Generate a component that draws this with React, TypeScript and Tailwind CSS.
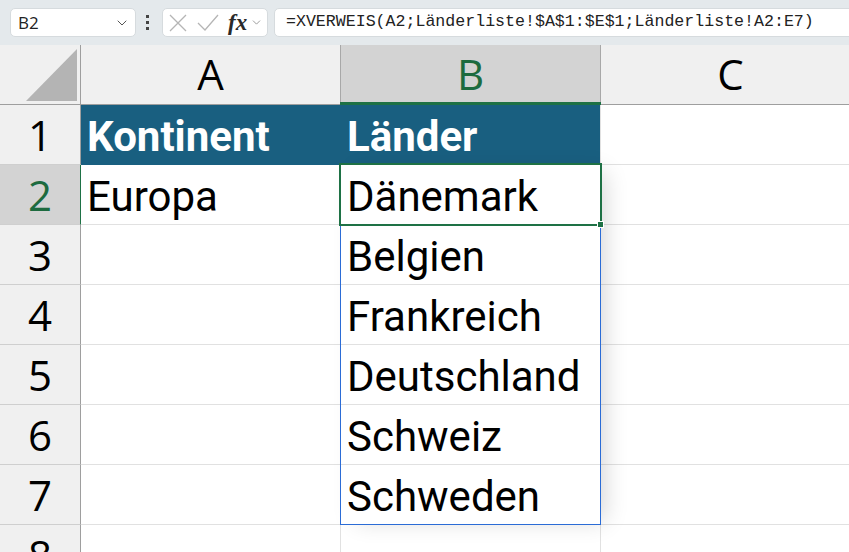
import { ChevronDown } from "lucide-react";

type Row = { n: number; a?: string; b?: string; head?: boolean; selected?: boolean };

const rows: Row[] = [
  { n: 1, a: "Kontinent", b: "Länder", head: true },
  { n: 2, a: "Europa", b: "Dänemark", selected: true },
  { n: 3, b: "Belgien" },
  { n: 4, b: "Frankreich" },
  { n: 5, b: "Deutschland" },
  { n: 6, b: "Schweiz" },
  { n: 7, b: "Schweden" },
  { n: 8 },
];

const cellText =
  "font-['Roboto',sans-serif] text-[42px] leading-[42px] text-black whitespace-nowrap";

const Toolbar = () => (
  <div className="flex h-[45px] items-center bg-[#e4e9ec]">
    <div className="ml-[10px] flex h-[29px] w-[126px] items-center justify-between rounded-[5px] border border-[#d6dbde] bg-white pl-[7px] pr-[5px]">
      <span className="font-['Open_Sans',sans-serif] text-[17px] text-[#222]">B2</span>
      <ChevronDown size={16} strokeWidth={1.5} className="text-[#555]" />
    </div>
    <div className="ml-[10px] flex flex-col gap-[3px]">
      <div className="h-[3px] w-[3px] bg-[#444]" />
      <div className="h-[3px] w-[3px] bg-[#444]" />
      <div className="h-[3px] w-[3px] bg-[#444]" />
    </div>
    <div className="ml-[13px] flex h-[29px] w-[106px] items-center rounded-[5px] border border-[#d6dbde] bg-white pl-[6px]">
      <svg width="18" height="18" viewBox="0 0 18 18" className="text-[#b5b5b5]">
        <path d="M1 1 L17 17 M17 1 L1 17" stroke="currentColor" strokeWidth="1.3" fill="none" />
      </svg>
      <svg width="22" height="17" viewBox="0 0 22 17" className="ml-[10px] text-[#b5b5b5]">
        <path d="M1 9 L8 16 L21 1" stroke="currentColor" strokeWidth="1.3" fill="none" />
      </svg>
      <span className="ml-[9px] font-['Liberation_Serif',serif] text-[23px] font-bold italic leading-none text-[#2a2a2a]">
        fx
      </span>
      <ChevronDown size={13} strokeWidth={1.5} className="ml-[3px] text-[#888]" />
    </div>
    <div className="ml-[6px] -mr-[10px] flex h-[29px] flex-1 items-center rounded-[5px] border border-[#d6dbde] bg-white pl-[11px]">
      <span className="font-['Liberation_Mono',monospace] text-[16.6px] text-[#222] whitespace-nowrap">
        =XVERWEIS(A2;Länderliste!$A$1:$E$1;Länderliste!A2:E7)
      </span>
    </div>
  </div>
);

const HeaderRow = () => (
  <div className="flex h-[60px] border-b border-[#9e9e9e] font-['Open_Sans',sans-serif] text-[42px] leading-none">
    <div className="relative w-[81px] shrink-0 border-r border-[#9e9e9e] bg-[#f0f0f0]">
      <svg className="absolute left-0 top-0" width="80" height="59" viewBox="0 0 80 59">
        <polygon points="26,56 77,4 77,56" fill="#b4b4b4" />
      </svg>
    </div>
    <div className="flex w-[260px] shrink-0 items-center justify-center border-r border-[#a8a8a8] bg-[#f0f0f0] pb-[2px] text-black">
      A
    </div>
    <div className="relative flex w-[260px] shrink-0 items-center justify-center border-r border-[#a8a8a8] bg-[#d3d3d3] pb-[2px] text-[#1d6b3f]">
      B
      <div className="absolute -bottom-[1px] -left-[1px] -right-[1px] h-[3px] bg-[#1e7145]" />
    </div>
    <div className="flex w-[260px] shrink-0 items-center justify-center border-r border-[#d4d4d4] bg-[#f0f0f0] pb-[2px] text-black">
      C
    </div>
  </div>
);

const SheetRow = ({ row }: { row: Row }) => {
  const fill = row.head ? "bg-[#195f80] border-[#195f80]" : "bg-white border-[#e1e1e1]";
  const text = row.head ? "font-bold text-white" : "";
  return (
    <div className="flex h-[60px] shrink-0">
      <div
        className={`flex w-[81px] shrink-0 items-center justify-center border-b border-r border-b-[#cfcfcf] font-['Open_Sans',sans-serif] text-[42px] leading-none ${
          row.selected
            ? "border-r-[#1e7145] bg-[#d3d3d3] text-[#1d6b3f]"
            : "border-r-[#9e9e9e] bg-[#f0f0f0] text-black"
        }`}
      >
        {row.n}
      </div>
      <div className={`flex w-[260px] shrink-0 items-end border-b border-r pb-[6px] pl-[6px] ${fill}`}>
        <span className={`${cellText} ${text}`}>{row.a}</span>
      </div>
      <div
        className={`flex w-[260px] shrink-0 items-end border-b border-r pb-[6px] pl-[6px] ${
          row.head ? "border-b-[#195f80] border-r-[#e1e1e1] bg-[#195f80]" : "border-[#e1e1e1] bg-white"
        }`}
      >
        <span className={`${cellText} ${text}`}>{row.b}</span>
      </div>
      <div className="w-[260px] shrink-0 border-b border-r border-[#e1e1e1] bg-white" />
    </div>
  );
};

export default function App() {
  return (
    <div className="relative h-[552px] w-[849px] overflow-hidden bg-white">
      <Toolbar />
      <HeaderRow />
      {rows.map((row) => (
        <SheetRow key={row.n} row={row} />
      ))}

      {/* spill range */}
      <div className="pointer-events-none absolute left-[340px] top-[164px] h-[361px] w-[261px] shadow-[10px_2px_22px_-6px_rgba(0,0,0,0.16)]" />
      <div className="pointer-events-none absolute left-[340px] top-[224px] h-[301px] w-[261px] border border-[#2b6cd6]" />

      {/* active cell B2 */}
      <div className="pointer-events-none absolute left-[339px] top-[163px] h-[63px] w-[263px] border-2 border-[#1e7145]" />
      <div className="pointer-events-none absolute left-[597px] top-[221px] h-[7px] w-[7px] border border-white bg-[#1e7145]" />
    </div>
  );
}
